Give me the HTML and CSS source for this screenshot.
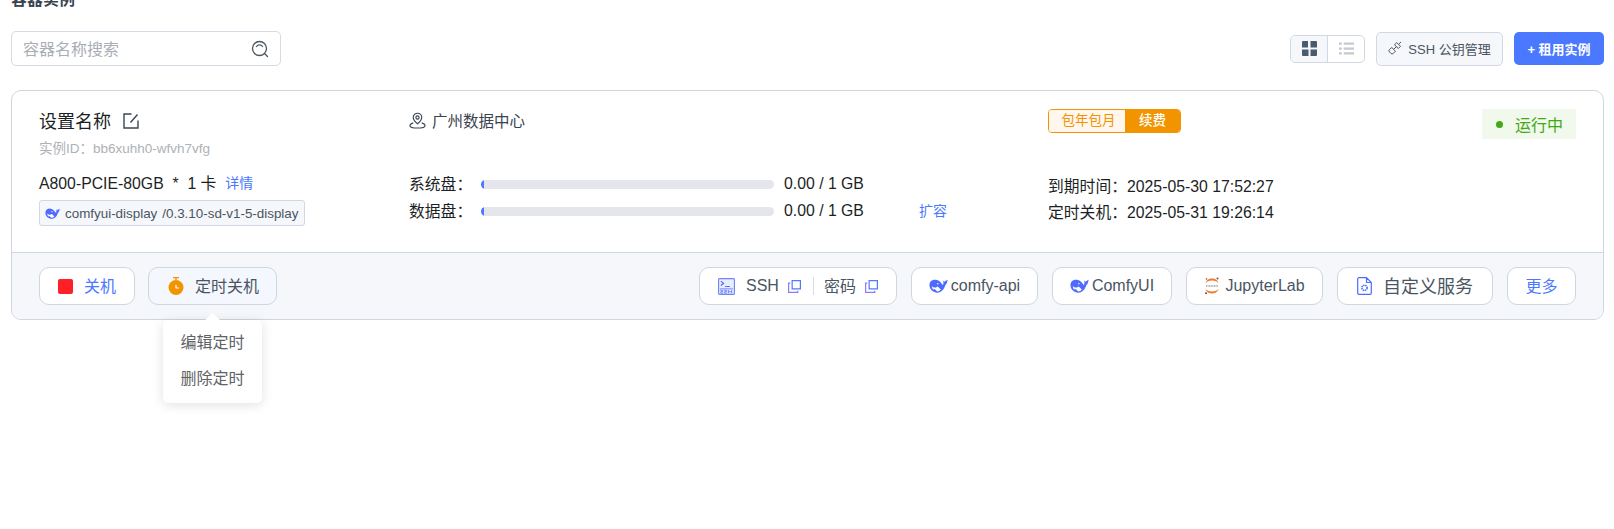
FILE: index.html
```html
<!DOCTYPE html>
<html lang="zh">
<head>
<meta charset="utf-8">
<title>容器实例</title>
<link rel="stylesheet" href="styles.css">
</head>
<body>
<svg class="defs" width="0" height="0" aria-hidden="true">
  <symbol id="whale" viewBox="0 0 20 16">
    <path fill="#4d6bfe" d="M.5 7C.5 3 4 1 7.500 1.500 11 2 13 5 14.500 7c1-1 1-3 0-5L16 3.500l3.500-2c0 2.500-1 4.500-2.500 6-1 3.500-4 8-9 7.500C3.500 14.500.5 11 .5 7z"/>
    <path fill="#fff" d="M3 8c2 2.500 5 1.500 6 .5 2 1.500 3 3 3.500 3.500-1.500 1.500-3 1.800-4 1.700-1-1.200-3-2.700-4-2.700 0 .8.500 1.300.8 1.800C3.500 11.500 3 9.500 3 8z"/>
    <circle cx="9.300" cy="5.600" r=".8" fill="#fff"/>
  </symbol>
  <symbol id="copy" viewBox="0 0 16 16">
    <path fill="none" stroke="#4d7cff" stroke-width="1.300" d="M5.500 1.700h8.800v8.800H5.500z"/>
    <path fill="none" stroke="#8f7cf0" stroke-width="1.300" d="M3.500 4.500H1.700v9.800h9.800v-1.800"/>
  </symbol>
</svg>

<main class="page">
  <h1 class="title">容器实例</h1>

  <div class="toolbar">
    <div class="search">
      <span class="search-text">容器名称搜索</span>
      <svg class="search-icon" viewBox="0 0 18 18"><circle cx="8.500" cy="8.500" r="7" fill="none" stroke="#4a5563" stroke-width="1.300"/><path d="M5.500 6.500a3.600 3.600 0 0 1 6 0M13.500 13.500l3 3" fill="none" stroke="#4a5563" stroke-width="1.300" stroke-linecap="round"/></svg>
    </div>
    <div class="tools">
      <div class="view-toggle">
        <span class="view-item view-active">
          <svg class="view-icon" viewBox="0 0 15 15"><path fill="#4a5a70" d="M0 1a1 1 0 0 1 1-1h5v6.500H0zM8.500 0H14a1 1 0 0 1 1 1v5.500H8.500zM0 8.500h6.500V15H1a1 1 0 0 1-1-1zM8.500 8.500H15V14a1 1 0 0 1-1 1H8.500z"/></svg>
        </span>
        <span class="view-item">
          <svg class="view-icon" viewBox="0 0 16 15"><path fill="#c6c8d2" d="M0 1h3v2.400H0zM5 1h11v2.400H5zM0 6.300h3v2.400H0zM5 6.300h11v2.400H5zM0 11.600h3V14H0zM5 11.600h11V14H5z"/></svg>
        </span>
      </div>
      <button class="key-btn">
        <svg class="key-icon" viewBox="0 0 14 14"><path fill="none" stroke="#4a5563" stroke-width="1" d="M1.500 8.500L3.800 6.500l3.700 3.700-2.200 2.200a1.700 1.700 0 0 1-2.400 0l-1.400-1.400a1.700 1.700 0 0 1 0-2.500zM6.500 3.800L8.800 1.600l3.700 3.700-2.200 2.200zM5.700 8.300l2.600-2.600M11 2.800L13 1"/></svg>
        <span>SSH 公钥管理</span>
      </button>
      <button class="rent-btn">+ 租用实例</button>
    </div>
  </div>

  <section class="card">
    <div class="card-body">
      <div class="col col-info">
        <div class="name-row">
          <span class="name">设置名称</span>
          <svg class="edit-icon" viewBox="0 0 16 16"><path fill="none" stroke="#3a4656" stroke-width="1.400" d="M8.500 1H1v14h14V7.500M14.500 1.500l-7 8"/></svg>
        </div>
        <div class="instance-id">实例ID：bb6xuhh0-wfvh7vfg</div>
        <div class="gpu-row"><span>A800-PCIE-80GB&nbsp; *&nbsp; 1 卡</span><a class="link link-detail">详情</a></div>
        <div class="image-tag">
          <svg class="whale-sm"><use href="#whale"/></svg>
          <span>comfyui-display</span><span class="image-ver">/0.3.10-sd-v1-5-display</span>
        </div>
      </div>

      <div class="col col-disk">
        <div class="location">
          <svg class="pin-icon" viewBox="0 0 18 18"><path fill="none" stroke="#3a4656" stroke-width="1.200" d="M9 12.500C6.500 10.500 4.500 8.500 4.500 5.800a4.500 4.500 0 0 1 9 0c0 2.700-2 4.700-4.500 6.700z"/><circle cx="9" cy="5.800" r="1.700" fill="none" stroke="#3a4656" stroke-width="1.200"/><path fill="none" stroke="#3a4656" stroke-width="1.200" d="M4.500 11.500C2.500 12.200 1 13.300 1 14.500c0 1.400 3.500 2.500 8 2.500s8-1.100 8-2.500c0-1.200-1.500-2.300-3.500-3"/></svg>
          <span>广州数据中心</span>
        </div>
        <div class="disk-row">
          <span class="disk-label">系统盘：</span>
          <span class="bar"><span class="bar-fill"></span></span>
          <span class="disk-value">0.00 / 1 GB</span>
        </div>
        <div class="disk-row">
          <span class="disk-label">数据盘：</span>
          <span class="bar"><span class="bar-fill"></span></span>
          <span class="disk-value">0.00 / 1 GB</span>
          <a class="link link-expand">扩容</a>
        </div>
      </div>

      <div class="col col-time">
        <div class="billing">
          <span class="billing-type">包年包月</span><span class="billing-renew">续费</span>
        </div>
        <div class="time-row">到期时间：2025-05-30 17:52:27</div>
        <div class="time-row">定时关机：2025-05-31 19:26:14</div>
      </div>

      <div class="status"><i class="status-dot"></i><span>运行中</span></div>
    </div>

    <div class="card-foot">
      <div class="foot-group foot-left">
        <button class="btn btn-stop"><i class="stop-square"></i><span class="blue">关机</span></button>
        <div class="timer-wrap">
          <button class="btn btn-timer">
            <svg class="timer-icon" viewBox="0 0 16 18"><path fill="#f29400" d="M5 0h6v1.300H8.700v2H7.300v-2H5z"/><circle cx="8" cy="10.500" r="7.500" fill="#f29400"/><path fill="none" stroke="#fff" stroke-width="1.200" d="M8 8v3h3"/></svg>
            <span>定时关机</span>
          </button>
          <div class="popover">
            <div class="popover-item">编辑定时</div>
            <div class="popover-item">删除定时</div>
          </div>
        </div>
      </div>

      <div class="foot-group">
        <div class="btn btn-ssh">
          <svg class="ssh-icon" viewBox="0 0 18 18"><rect x=".6" y=".6" width="16.800" height="16.800" rx="1" fill="#e9edff" stroke="#6f86f5" stroke-width="1.200"/><path fill="none" stroke="#4d6bfe" stroke-width="1.200" d="M3 3.500l3 2.200-3 2.200M7.500 9h5"/><path fill="none" stroke="#6f86f5" d="M2 11.500h14"/><path fill="none" stroke="#6f86f5" stroke-width="1" d="M2.500 13h2.500v1.500H3V16h2.500M6.500 13H9v1.500H7V16h2.500M11 12.800V16.300M14.500 12.800V16.300M11 14.500h3.500"/></svg>
          <span class="ssh-label">SSH</span>
          <svg class="copy-icon"><use href="#copy"/></svg>
          <i class="divider"></i>
          <span>密码</span>
          <svg class="copy-icon"><use href="#copy"/></svg>
        </div>
        <button class="btn btn-app btn-api"><svg class="whale"><use href="#whale"/></svg><span>comfy-api</span></button>
        <button class="btn btn-app btn-comfy"><svg class="whale"><use href="#whale"/></svg><span>ComfyUI</span></button>
        <button class="btn btn-app btn-jupyter">
          <svg class="jupyter-icon" viewBox="0 0 16 18"><path fill="#f37726" d="M8 3.500c-3 0-5.500 1-6.500 2.700C2 3.200 4.800 1.500 8 1.500s6 1.700 6.500 4.700C13.500 4.500 11 3.500 8 3.500zM8 14.500c3 0 5.500-1 6.500-2.700-.5 3-3.300 4.700-6.500 4.700s-6-1.700-6.500-4.700c1 1.700 3.500 2.700 6.500 2.700z"/><circle cx="13.500" cy="1.500" r="1" fill="#555"/><circle cx="2" cy="16.200" r="1" fill="#555"/><circle cx="2.500" cy="2" r=".8" fill="#555"/><path stroke="#999" stroke-width="1.400" stroke-dasharray="1 .6" d="M2 9h12"/></svg>
          <span>JupyterLab</span>
        </button>
        <button class="btn btn-custom">
          <svg class="doc-icon" viewBox="0 0 15 18"><path fill="none" stroke="#4d6bfe" stroke-width="1.200" d="M9.500.7H2A1.300 1.300 0 0 0 .7 2v14A1.300 1.300 0 0 0 2 17.300h11a1.300 1.300 0 0 0 1.300-1.300V5.500zM9.500.7v4.800h4.800"/><circle cx="7.500" cy="10.800" r="2.600" fill="none" stroke="#4d6bfe" stroke-width="1.600" stroke-dasharray="1.500 .6"/></svg>
          <span>自定义服务</span>
        </button>
        <button class="btn btn-more"><span class="blue">更多</span></button>
      </div>
    </div>
  </section>
</main>
</body>
</html>
```

FILE: styles.css
```css
* { box-sizing: border-box; }

html, body {
  margin: 0;
  height: 529px;
  overflow: hidden;
  background: #fff;
}

body {
  font-family: "Liberation Sans", "Noto Sans CJK SC", sans-serif;
  color: #1c1f26;
}

.defs { display: block; height: 0; }

.page { padding: 0 10px 0 11px; }

button { font: inherit; cursor: pointer; }

.title {
  margin: -11px 0 0;
  height: 22px;
  font-size: 16px;
  line-height: 22px;
  font-weight: 700;
  color: #3a4350;
}

/* toolbar */
.toolbar {
  margin-top: 20px;
  height: 35px;
  display: flex;
  justify-content: space-between;
  align-items: center;
}

.search {
  width: 270px;
  height: 35px;
  padding: 0 11px 0 12px;
  display: flex;
  align-items: center;
  justify-content: space-between;
  border: 1px solid #d5dbe5;
  border-radius: 5px;
}

.search-text { font-size: 16px; color: #a9adb5; margin-bottom: 2px; margin-left: -1px; }
.search-icon { width: 18px; height: 18px; }

.tools { display: flex; align-items: center; }

.view-toggle {
  width: 75px;
  height: 28px;
  display: flex;
  border: 1px solid #d0d8e3;
  border-radius: 5px;
  overflow: hidden;
}

.view-item {
  flex: 1;
  display: flex;
  align-items: center;
  justify-content: center;
}

.view-active { background: #f5f7fa; border-right: 1px solid #d0d8e3; }
.view-icon { width: 15px; height: 15px; }

.key-btn {
  margin-left: 11px;
  width: 127px;
  height: 34px;
  padding: 0 0 1px;
  display: flex;
  align-items: center;
  justify-content: center;
  gap: 6px;
  background: #f5f7fa;
  border: 1px solid #d0d8e3;
  border-radius: 5px;
  font-size: 13px;
  color: #4a5563;
}

.key-icon { width: 14px; height: 14px; }

.rent-btn {
  margin-left: 11px;
  width: 90px;
  height: 33px;
  padding: 0;
  background: #4a78ff;
  border: 0;
  border-radius: 5px;
  font-size: 13px;
  font-weight: 700;
  color: #fff;
}

/* card */
.card {
  margin-top: 24px;
  height: 230px;
  display: flex;
  flex-direction: column;
  border: 1px solid #ced6e0;
  border-radius: 10px;
}

.card-body {
  flex: 1;
  padding-left: 27px;
  display: flex;
  position: relative;
}

.col { display: flex; flex-direction: column; }
.col-info { width: 370px; }
.col-disk { width: 639px; }
.col-time { flex: 1; }

.name-row {
  margin-top: 17px;
  height: 24px;
  display: flex;
  align-items: center;
  gap: 11px;
}

.name { font-size: 18px; }
.edit-icon { width: 16px; height: 16px; margin-bottom: -1px; margin-left: 1px; }

.instance-id {
  margin-top: 7px;
  font-size: 13.500px;
  line-height: 20px;
  color: #aeb1b7;
}

.gpu-row {
  margin-top: 12px;
  height: 22px;
  display: flex;
  align-items: center;
  gap: 9px;
  font-size: 15.800px;
}

.link { color: #4a78ff; font-size: 14px; }

.image-tag {
  margin-top: 7px;
  width: 266px;
  height: 26px;
  padding-left: 5px;
  display: flex;
  align-items: center;
  gap: 5px;
  background: #f5f7fa;
  border: 1px solid #d0d8e3;
  border-radius: 3px;
  font-size: 13.400px;
  color: #4a5563;
  white-space: nowrap;
}

.whale-sm { width: 15px; height: 13px; flex: none; }

.location {
  margin-top: 18px;
  height: 22px;
  display: flex;
  align-items: center;
  gap: 6px;
  font-size: 15.500px;
  color: #3a4350;
}

.pin-icon { width: 17px; height: 17px; }

.disk-row {
  height: 27px;
  display: flex;
  align-items: center;
  font-size: 15.800px;
}

.location + .disk-row { margin-top: 40px; }

.disk-label { width: 72px; margin-bottom: 3px; }

.bar {
  width: 293px;
  height: 9px;
  background: #e5e6eb;
  border-radius: 5px;
  overflow: hidden;
}

.bar-fill {
  display: block;
  width: 3px;
  height: 100%;
  background: #4a78ff;
  border-radius: 5px 0 0 5px;
}

.disk-value { margin-left: 10px; width: 135px; margin-bottom: 2px; }
.link-expand { margin-bottom: 3px; }

.billing {
  margin-top: 18px;
  width: 133px;
  height: 24px;
  display: flex;
  border: 1px solid #f29400;
  border-radius: 4px;
  overflow: hidden;
  font-size: 13.500px;
  line-height: 21px;
}

.billing-type { width: 76px; padding-left: 3px; text-align: center; background: #fff6ee; color: #f29400; }
.billing-renew { flex: 1; text-align: center; background: #f29400; color: #fff; font-weight: 500; }

.time-row {
  height: 26px;
  line-height: 26px;
  font-size: 15.800px;
}

.billing + .time-row { margin-top: 41px; }

.status {
  position: absolute;
  top: 18px;
  right: 27px;
  width: 94px;
  height: 30px;
  padding-left: 14px;
  display: flex;
  align-items: center;
  gap: 12px;
  background: #f0f9eb;
  color: #43a815;
  font-size: 16px;
}

.status-dot { width: 7px; height: 7px; border-radius: 50%; background: #43a815; }

/* footer */
.card-foot {
  height: 67px;
  padding: 0 27px 0 27px;
  display: flex;
  align-items: center;
  justify-content: space-between;
  background: #f5f7fa;
  border-top: 1px solid #ced6e0;
  border-radius: 0 0 10px 10px;
}

.foot-group { display: flex; align-items: center; gap: 14px; }
.foot-left { gap: 13px; }

.btn {
  height: 38px;
  padding: 0 0 2px;
  display: flex;
  align-items: center;
  justify-content: center;
  background: #fff;
  border: 1px solid #ced6e0;
  border-radius: 10px;
  font-size: 16px;
  color: #4a5563;
}

.blue { color: #4a78ff; }

.btn-stop { width: 96px; gap: 11px; }
.stop-square { width: 15px; height: 15px; background: #ff1f26; border-radius: 2px; margin-top: 2px; }

.timer-wrap { position: relative; }
.btn-timer { width: 129px; gap: 11px; padding-left: 2px; background: #f4f7fd; }
.timer-icon { width: 16px; height: 18px; margin-top: 2px; }

.popover {
  position: absolute;
  top: 53px;
  left: 15px;
  width: 99px;
  height: 83px;
  padding: 5px 0;
  background: #fff;
  border-radius: 5px;
  box-shadow: 0 2px 12px rgba(0, 0, 0, .12);
  font-size: 16px;
  color: #606266;
  text-align: center;
}

.popover::before {
  content: "";
  position: absolute;
  top: -5px;
  left: 44px;
  width: 11px;
  height: 11px;
  background: #fff;
  transform: rotate(45deg);
}

.popover-item { position: relative; height: 36px; line-height: 36px; }

.btn-ssh { width: 198px; gap: 9px; justify-content: flex-start; padding-left: 18px; }
.ssh-icon { width: 17px; height: 17px; margin-right: 2px; margin-top: 2px; }
.ssh-label { margin-top: 2px; }
.copy-icon { width: 15px; height: 15px; margin-top: 2px; margin-left: -1px; }
.divider { width: 1px; height: 18px; background: #d5dbe5; margin: 2px 1px 0 2px; }

.btn-app { gap: 3px; padding: 0; }
.btn-api { width: 127px; }
.btn-comfy { width: 120px; }
.btn-jupyter { width: 137px; gap: 5px; }
.whale { width: 19px; height: 16px; }
.jupyter-icon { width: 16px; height: 18px; }

.btn-custom { width: 156px; gap: 11px; font-size: 18px; }
.doc-icon { width: 15px; height: 18px; margin-top: 2px; }

.btn-more { width: 69px; }
```
